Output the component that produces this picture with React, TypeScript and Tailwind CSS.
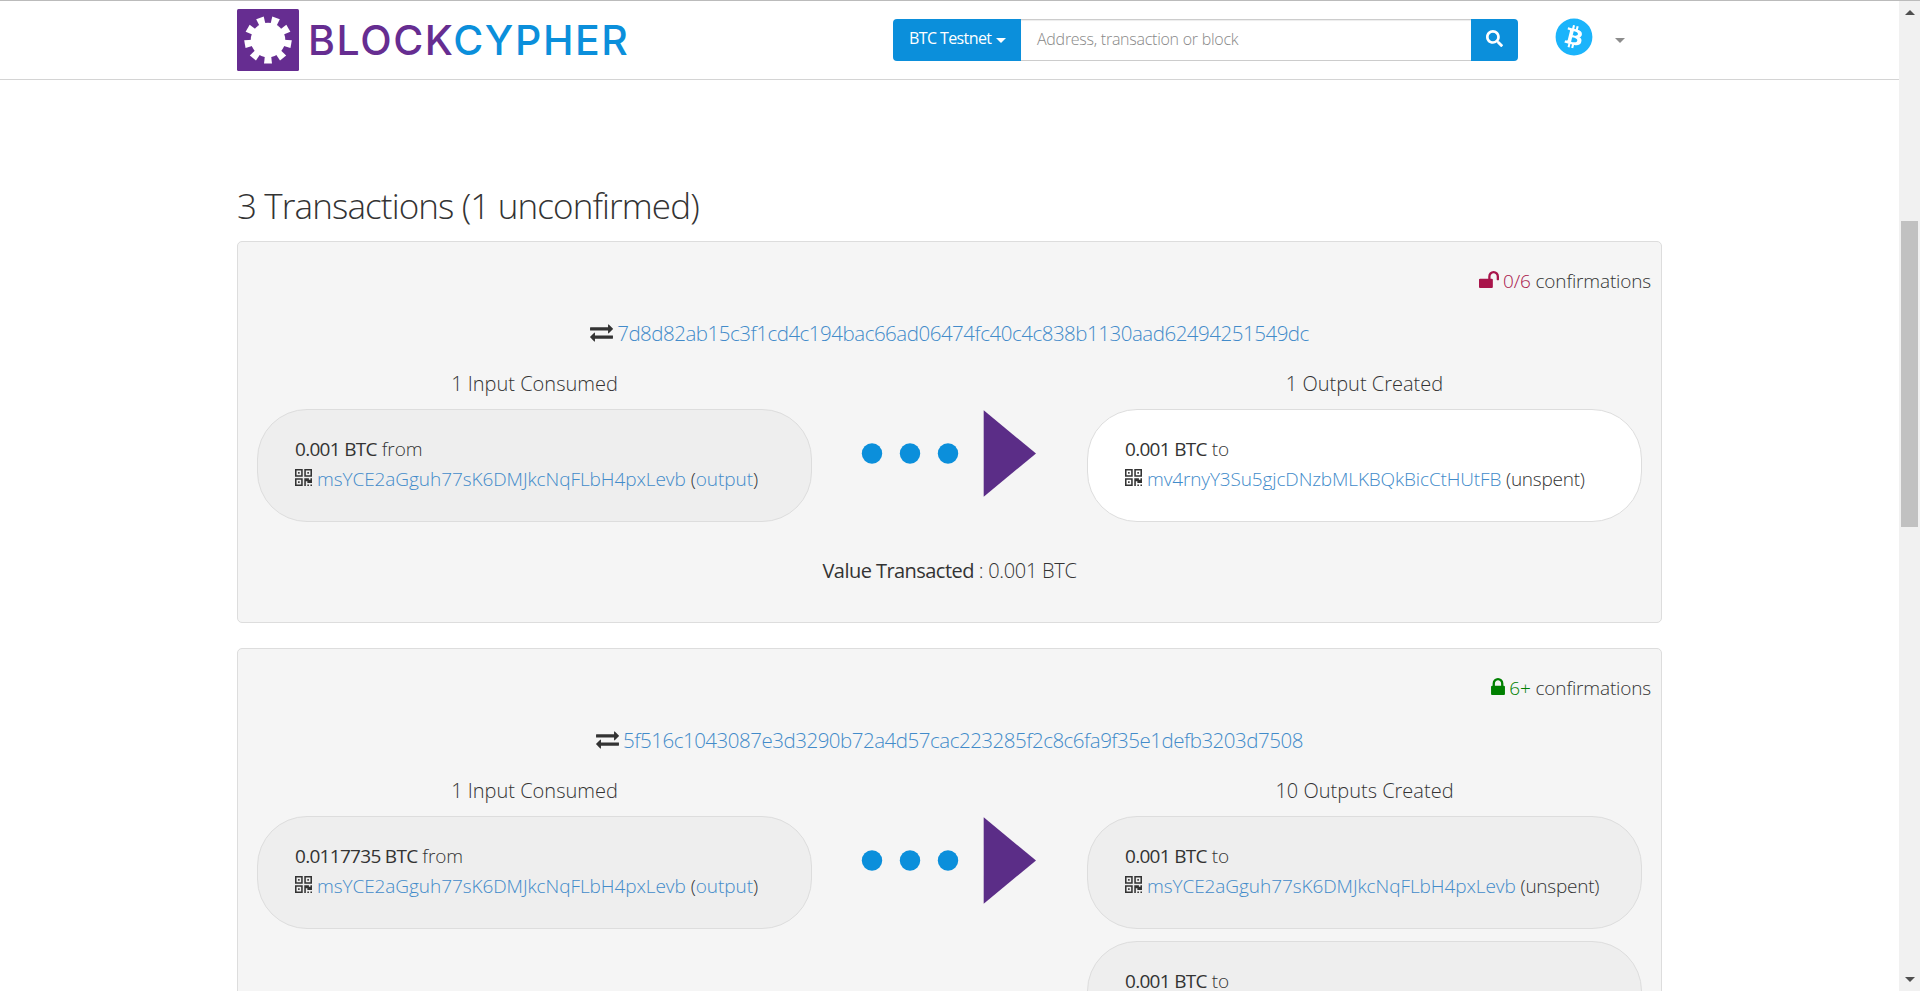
import type { ReactNode } from "react";
import { FaBitcoin, FaSearch } from "react-icons/fa";

type Entry = {
  amount: string;
  address: string;
  status: "output" | "unspent";
  highlighted?: boolean;
};

type Transaction = {
  hash: string;
  confirmed: boolean;
  inputsLabel: string;
  outputsLabel: string;
  inputs: Entry[];
  outputs: Entry[];
  value: string;
};

const ADDRESS = "msYCE2aGguh77sK6DMJkcNqFLbH4pxLevb";

const transactions: Transaction[] = [
  {
    hash: "7d8d82ab15c3f1cd4c194bac66ad06474fc40c4c838b1130aad62494251549dc",
    confirmed: false,
    inputsLabel: "1 Input Consumed",
    outputsLabel: "1 Output Created",
    inputs: [{ amount: "0.001 BTC", address: ADDRESS, status: "output" }],
    outputs: [
      {
        amount: "0.001 BTC",
        address: "mv4rnyY3Su5gjcDNzbMLKBQkBicCtHUtFB",
        status: "unspent",
        highlighted: true,
      },
    ],
    value: "0.001 BTC",
  },
  {
    hash: "5f516c1043087e3d3290b72a4d57cac223285f2c8c6fa9f35e1defb3203d7508",
    confirmed: true,
    inputsLabel: "1 Input Consumed",
    outputsLabel: "10 Outputs Created",
    inputs: [{ amount: "0.0117735 BTC", address: ADDRESS, status: "output" }],
    outputs: [
      { amount: "0.001 BTC", address: ADDRESS, status: "unspent" },
      { amount: "0.001 BTC", address: ADDRESS, status: "unspent" },
    ],
    value: "0.0117735 BTC",
  },
];

const GEAR_ANGLES = [0, 40, 80, 120, 160, 200, 240, 280, 320];

function Logo() {
  return (
    <a className="flex items-center">
      <svg className="h-[62px] w-[62px] shrink-0" viewBox="0 0 62 62">
        <rect width="62" height="62" rx="1.5" fill="#662d91" />
        <g fill="#fff">
          <circle cx="31" cy="31" r="17.3" />
          {GEAR_ANGLES.map((angle) => (
            <polygon
              key={angle}
              points="28,46 34,46 35,54.5 27,54.5"
              transform={`rotate(${angle} 31 31)`}
            />
          ))}
        </g>
      </svg>
      <span className="ml-[9px] font-['Inter',sans-serif] text-[41px] leading-[62px] font-[500] tracking-[1.6px] text-[#662d91]">
        BLOCK<span className="text-[#0b8fdb]">CYPHER</span>
      </span>
    </a>
  );
}

function Header() {
  return (
    <header className="flex h-20 border-t border-b border-t-[#bbb] border-b-[#d4d4d4] bg-white pl-[237px]">
      <div className="w-[656px] pt-2">
        <Logo />
      </div>
      <div className="mt-[18px] flex h-[42px] w-[625px]">
        <button className="flex w-[128px] items-center rounded-l-[4px] bg-[#0b8fdb] pb-[4px] pl-4 text-[16px] font-normal tracking-[-0.6px] whitespace-nowrap text-white">
          BTC Testnet
          <span className="mt-1 ml-[5px] border-x-[5px] border-t-[5px] border-x-transparent border-t-white" />
        </button>
        <div className="flex flex-1 items-center border-y border-[#ccc] pb-0.5 pl-4 text-[16px] tracking-[-0.26px] text-[#888] shadow-[inset_0_1px_1px_rgba(0,0,0,0.075)]">
          Address, transaction or block
        </div>
        <button className="flex w-[47px] items-center justify-center rounded-r-[4px] bg-[#0b8fdb] text-white">
          <FaSearch className="mb-1 h-[17px] w-[17px]" />
        </button>
      </div>
      <FaBitcoin className="mt-[17px] ml-[37px] h-[38px] w-[38px] text-[#1bb4fb]" />
      <span className="mt-[37px] ml-[22px] h-0 w-0 border-x-[5px] border-t-[5px] border-x-transparent border-t-[#8c8c8c]" />
    </header>
  );
}

function TransferIcon() {
  return (
    <svg className="mr-1 h-[18px] w-[23px] shrink-0" viewBox="0 256 1792 1408" fill="#333">
      <path d="M1792 1184v192q0 13-9.5 22.5t-22.5 9.5h-1376v192q0 13-9.5 22.5t-22.5 9.5q-12 0-24-10l-319-320q-9-9-9-22 0-14 9-23l320-320q9-9 23-9 13 0 22.5 9.5t9.5 22.5v192h1376q13 0 22.5 9.5t9.5 22.5zm0-544q0 14-9 23l-320 320q-9 9-23 9-13 0-22.5-9.5t-9.5-22.5v-192h-1376q-13 0-22.5-9.5t-9.5-22.5v-192q0-13 9.5-22.5t22.5-9.5h1376v-192q0-14 9-23t23-9q12 0 24 10l319 319q9 9 9 23z" />
    </svg>
  );
}

function LockIcon() {
  return (
    <svg className="mr-1 mb-1 h-[17px] w-[14px]" viewBox="320 128 1152 1408" fill="#008000">
      <path d="M640 768h512v-192q0-106-75-181t-181-75-181 75-75 181v192zm832 96v576q0 40-28 68t-68 28h-960q-40 0-68-28t-28-68v-576q0-40 28-68t68-28h32v-192q0-184 132-316t316-132 316 132 132 316v192h32q40 0 68 28t28 68z" />
    </svg>
  );
}

function UnlockIcon() {
  return (
    <svg className="mr-1 mb-1 h-[17px] w-[20px]" viewBox="64 128 1664 1408" fill="#a9154b">
      <path d="M1728 576v256q0 26-19 45t-45 19h-64q-26 0-45-19t-19-45v-256q0-106-75-181t-181-75-181 75-75 181v192h96q40 0 68 28t28 68v576q0 40-28 68t-68 28h-960q-40 0-68-28t-28-68v-576q0-40 28-68t68-28h672v-192q0-185 131.5-316.5t316.5-131.5 316.5 131.5 131.5 316.5z" />
    </svg>
  );
}

function QrIcon() {
  return (
    <svg className="mr-[5px] mb-[3px] h-[17px] w-[17px] shrink-0" viewBox="0 0 11 11" fill="#333">
      <path
        fillRule="evenodd"
        d="M0 0h5v5H0zM1 1v3h3V1zM2 2h1v1H2zM6 0h5v5H6zM7 1v3h3V1zM8 2h1v1H8zM0 6h5v5H0zM1 7v3h3V7zM2 8h1v1H2zM11 6v3H8V8H7v3H6V6h3v1h1V6zM8 10h1v1H8zM10 10h1v1h-1z"
      />
    </svg>
  );
}

function Flow() {
  return (
    <svg className="mt-[40px] h-[90px] w-[275px] shrink-0" viewBox="0 0 275 90">
      <g fill="#0b8fdb">
        <circle cx="60" cy="44.5" r="10.2" />
        <circle cx="98" cy="44.5" r="10.2" />
        <circle cx="136" cy="44.5" r="10.2" />
      </g>
      <polygon points="171.7,1.3 224,44.5 171.7,87.7" fill="#5b2d87" />
    </svg>
  );
}

function Pill({ entry, direction }: { entry: Entry; direction: "from" | "to" }) {
  return (
    <div
      className={`h-[113px] rounded-[50px] border border-[#ddd] pt-6 pl-[37px] text-[19px] leading-[30px] tracking-[-0.07px] ${
        entry.highlighted ? "bg-white" : "bg-[#eee]"
      }`}
    >
      <div>
        <b className="font-medium tracking-[-0.7px]">{entry.amount}</b> {direction}
      </div>
      <div className="flex items-center whitespace-pre">
        <QrIcon />
        <a className={entry.highlighted ? "tracking-[-0.13px] text-[#428bca]" : "text-[#428bca]"}>
          {entry.address}
        </a>
        {entry.status === "output" ? (
          <span>
            {" "}(<a className="text-[#428bca]">output</a>)
          </span>
        ) : (
          <span className="tracking-[-0.25px]"> (unspent)</span>
        )}
      </div>
    </div>
  );
}

function Column({ label, children }: { label: string; children: ReactNode }) {
  return (
    <div className="w-[555px]">
      <div className="mb-[10px] text-center text-[20px] leading-[30px]">{label}</div>
      <div className="flex flex-col gap-3">{children}</div>
    </div>
  );
}

function TransactionCard({ tx }: { tx: Transaction }) {
  return (
    <section className="mb-[25px] rounded-[5px] border border-[#ddd] bg-[#f5f5f5] px-[19px] pt-6 pb-[36px]">
      <div className="-mr-[9px] flex items-center justify-end text-[19px] leading-[30px] tracking-[-0.15px] whitespace-pre">
        {tx.confirmed ? <LockIcon /> : <UnlockIcon />}
        <span className={tx.confirmed ? "text-[#008000]" : "text-[#a9154b]"}>
          {tx.confirmed ? "6+" : "0/6"}
        </span>
        <span> confirmations</span>
      </div>
      <div className="mt-[22px] flex items-center justify-center text-[20.5px] leading-[30px] tracking-[-0.48px]">
        <TransferIcon />
        <a className="text-[#428bca]">{tx.hash}</a>
      </div>
      <div className="mt-[21px] flex items-start">
        <Column label={tx.inputsLabel}>
          {tx.inputs.map((entry, i) => (
            <Pill key={i} entry={entry} direction="from" />
          ))}
        </Column>
        <Flow />
        <Column label={tx.outputsLabel}>
          {tx.outputs.map((entry, i) => (
            <Pill key={i} entry={entry} direction="to" />
          ))}
        </Column>
      </div>
      <div className="mt-[34px] text-center text-[20px] leading-[30px] tracking-[-0.3px]">
        <b className="font-medium tracking-[-0.55px]">Value Transacted</b> : {tx.value}
      </div>
    </section>
  );
}

function Scrollbar() {
  return (
    <div className="flex w-[21px] flex-col items-center border-t border-[#bbb] bg-[#f1f1f1]">
      <span className="mt-[9px] border-x-[5px] border-b-[5px] border-x-transparent border-b-[#505050]" />
      <div className="mt-[206px] h-[306px] w-[17px] bg-[#c1c1c1]" />
      <span className="mt-auto mb-[9px] border-x-[5px] border-t-[5px] border-x-transparent border-t-[#505050]" />
    </div>
  );
}

export default function App() {
  return (
    <div className="flex h-[991px] overflow-hidden bg-white font-['Open_Sans',sans-serif] font-light text-[#333]">
      <div className="w-[1899px] overflow-hidden">
        <Header />
        <main className="ml-[237px] w-[1425px] pt-[106px]">
          <h1 className="mb-[15px] text-[35px] leading-10 tracking-[-0.88px]">
            3 Transactions (1 unconfirmed)
          </h1>
          {transactions.map((tx) => (
            <TransactionCard key={tx.hash} tx={tx} />
          ))}
        </main>
      </div>
      <Scrollbar />
    </div>
  );
}
